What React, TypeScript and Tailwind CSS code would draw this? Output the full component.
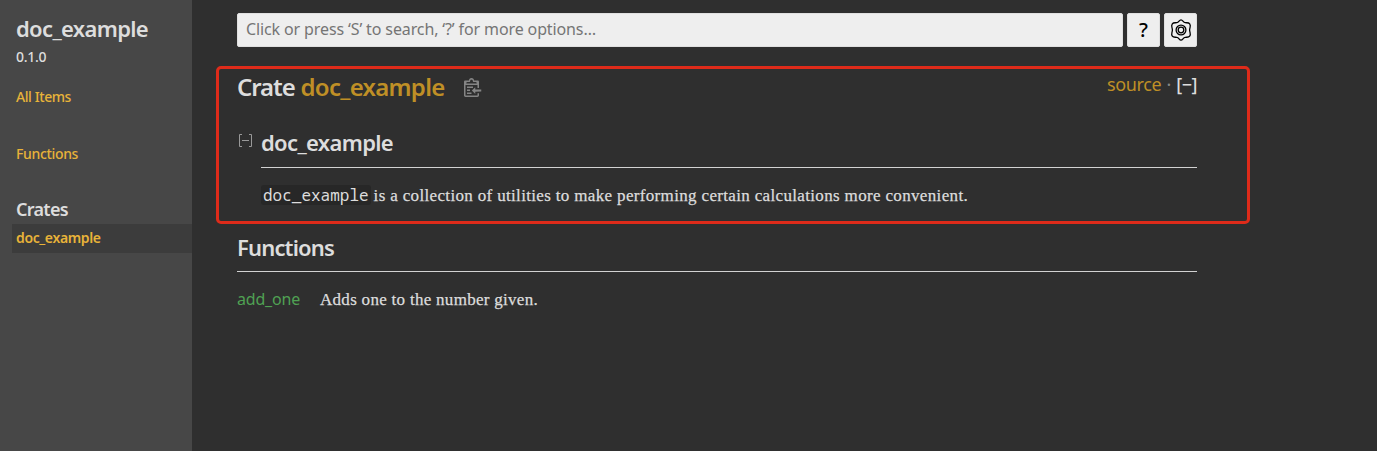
function ClipboardIcon() {
  return (
    <svg viewBox="0 0 24 25" width="18" height="19" fill="currentColor" aria-hidden="true">
      <path d="M18 20h2v3c0 1-1 2-2 2H2c-.998 0-2-1-2-2V5c0-.911.755-1.667 1.667-1.667h5A3.323 3.323 0 0110 0a3.323 3.323 0 013.333 3.333h5C19.245 3.333 20 4.09 20 5v8.333h-2V9H2v14h16v-3zM3 7h14c0-.911-.793-1.667-1.75-1.667H13.5c-.957 0-1.75-.755-1.75-1.666C11.75 2.755 10.957 2 10 2s-1.75.755-1.75 1.667c0 .911-.793 1.666-1.75 1.666H4.75C3.793 5.333 3 6.09 3 7z" />
      <path d="M4 19h6v2H4zM12 11H4v2h8zM4 17h4v-2H4zM15 15v-3l-4.5 4.5L15 21v-3l8.027-.032L23 15z" />
    </svg>
  );
}

function SettingsIcon() {
  return (
    <svg viewBox="0 0 22 22" width="22" height="22" fill="none" stroke="#000" strokeWidth="1.3" aria-hidden="true">
      <path
        strokeLinejoin="round"
        d="M11 .8C12.6 .8 13 2.8 14.6 3.5C16.2 4.2 18.4 3 19.7 4.8C21.3 7 19.6 8.6 19.6 11C19.6 13.4 21.3 15 19.7 17.2C18.4 19 16.2 17.8 14.6 18.5C13 19.2 12.6 21.2 11 21.2C9.4 21.2 9 19.2 7.4 18.5C5.8 17.8 3.6 19 2.3 17.2C.7 15 2.4 13.4 2.4 11C2.4 8.6 .7 7 2.3 4.8C3.6 3 5.8 4.2 7.4 3.5C9 2.8 9.4 .8 11 .8Z"
      />
      <circle cx="11" cy="11" r="4.9" />
      <circle cx="11" cy="11" r="2.8" />
    </svg>
  );
}

function Sidebar() {
  return (
    <nav className="flex w-48 shrink-0 flex-col bg-[#474747] pl-3 font-medium text-[#e8b339]">
      <h2 className="mt-[13px] pl-1 text-[22px] leading-[30px] font-semibold tracking-[-0.66px] text-[#ddd]">
        doc_example
      </h2>
      <div className="mt-1 pl-1 text-sm leading-5 tracking-[-0.3px] text-[#ddd]">0.1.0</div>
      <a className="mt-5 pl-1 text-sm leading-5 tracking-[-0.42px]">All Items</a>
      <a className="mt-[37px] pl-1 text-sm leading-5 tracking-[-0.34px]">Functions</a>
      <h3 className="mt-[33px] pl-1 text-lg leading-6 font-semibold tracking-[-0.7px] text-[#ddd]">Crates</h3>
      <a className="mt-[3px] h-[29px] bg-[#3c3c3c] pl-1 text-sm leading-[27px] font-semibold tracking-[-0.37px]">
        doc_example
      </a>
    </nav>
  );
}

function SearchBar() {
  return (
    <div className="flex h-[34px] gap-1 text-black">
      <div className="flex-1 rounded-xs border border-[#e0e0e0] bg-[#eee] pl-2 text-base leading-[31px] tracking-[-0.12px] text-[#757575]">
        Click or press ‘S’ to search, ‘?’ for more options…
      </div>
      <button className="w-[33px] rounded-xs border border-[#e0e0e0] bg-[#eee] text-xl leading-8 font-medium">?</button>
      <button className="flex w-[33px] items-center justify-center rounded-xs border border-[#e0e0e0] bg-[#eee]">
        <SettingsIcon />
      </button>
    </div>
  );
}

export default function App() {
  return (
    <div className="relative flex h-[451px] overflow-hidden bg-[#2f2f2f] font-['Noto_Sans',sans-serif] text-[#ddd]">
      <Sidebar />
      <main className="ml-[45px] w-[960px] pt-[13px]">
        <SearchBar />
        <div className="mt-6 flex h-8 justify-between">
          <h1 className="flex items-center text-2xl leading-8 font-semibold">
            <span className="tracking-[-1.1px]">Crate</span>
            <span className="ml-1.5 tracking-[-0.73px] text-[#bf8f26]">doc_example</span>
            <span className="ml-[19px] text-[#858585]">
              <ClipboardIcon />
            </span>
          </h1>
          <div className="flex text-lg leading-[26px]">
            <span className="tracking-[-0.33px] text-[#bf8f26]">source</span>
            <span className="ml-[5px] text-[#888]">·</span>
            <span className="ml-[5px] font-medium tracking-[-0.5px]">[−]</span>
          </div>
        </div>
        <div className="mt-[23px] flex">
          <span className="mt-2 w-6 shrink-0 text-[#999]">
            <svg viewBox="0 0 16 14" width="16" height="14" fill="none" stroke="currentColor" aria-hidden="true">
              <path d="M5 .5H2.5v12H5M12 .5h2.5v12H12M5 6.5h7" />
            </svg>
          </span>
          <section className="flex-1">
            <h2 className="h-[42px] border-b border-[#d2d2d2] text-[22px] leading-[33px] font-semibold tracking-[-0.66px]">
              doc_example
            </h2>
            <p className="mt-[17px] flex h-5 font-['Liberation_Serif',serif] text-[17px] leading-[22px] tracking-[0.34px] [-webkit-text-stroke:0.25px]">
              <code className="mr-[3px] h-5 rounded-[3px] bg-[#272727] px-0.5 font-['Noto_Sans_Mono',monospace] text-base leading-[21px] tracking-normal [-webkit-text-stroke:0px]">
                doc_example
              </code>
              is a collection of utilities to make performing certain calculations more convenient.
            </p>
          </section>
        </div>
        <h2 className="mt-[26px] h-[41px] border-b border-[#d2d2d2] text-[22px] leading-[33px] font-semibold tracking-[-0.84px]">
          Functions
        </h2>
        <div className="mt-[17px] flex text-base leading-5">
          <a className="w-[83px] tracking-[-0.2px] text-[#4fa153]">add_one</a>
          <span className="font-['Liberation_Serif',serif] text-[17px] leading-[22px] tracking-[0.29px] [-webkit-text-stroke:0.25px]">
            Adds one to the number given.
          </span>
        </div>
      </main>
      <div className="pointer-events-none absolute top-[66px] left-[216px] h-[158px] w-[1034px] rounded-[5px] border-3 border-[#de2b1a]" />
    </div>
  );
}
